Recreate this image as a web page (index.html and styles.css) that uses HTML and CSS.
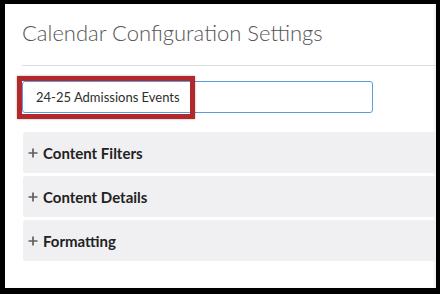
FILE: index.html
```html
<!DOCTYPE html>
<html lang="en">
<head>
<meta charset="utf-8">
<title>Calendar Configuration Settings</title>
<link rel="stylesheet" href="styles.css">
</head>
<body>
<div class="frame">
  <div class="page">
    <div class="content">
      <h1 class="title">Calendar Configuration Settings</h1>
      <div class="divider"></div>
      <div class="field">
        <input class="name-input" type="text" value="24-25 Admissions Events">
        <div class="highlight"></div>
      </div>
      <div class="sections">
        <div class="section">
          <svg class="plus" width="10" height="10" viewBox="0 0 10 10"><path d="M5 0.5V9.5M0.5 5H9.5" stroke="#5f5f5f" stroke-width="1.7" fill="none"/></svg>
          <span class="section-label">Content Filters</span>
        </div>
        <div class="section">
          <svg class="plus" width="10" height="10" viewBox="0 0 10 10"><path d="M5 0.5V9.5M0.5 5H9.5" stroke="#5f5f5f" stroke-width="1.7" fill="none"/></svg>
          <span class="section-label">Content Details</span>
        </div>
        <div class="section">
          <svg class="plus" width="10" height="10" viewBox="0 0 10 10"><path d="M5 0.5V9.5M0.5 5H9.5" stroke="#5f5f5f" stroke-width="1.7" fill="none"/></svg>
          <span class="section-label">Formatting</span>
        </div>
      </div>
    </div>
  </div>
</div>
</body>
</html>
```
FILE: styles.css
```css
html, body {
  margin: 0;
  padding: 0;
  background: #000;
}
body {
  width: 440px;
  height: 294px;
  overflow: hidden;
  font-family: Lato, "Liberation Sans", sans-serif;
}
.frame {
  padding: 4px 4px 6px 5px;
  height: 294px;
  box-sizing: border-box;
  display: flex;
}
.page {
  flex: 1;
  background: #fff;
  overflow: hidden;
  box-shadow: inset -2px 0 2px rgba(0,0,0,0.06);
}
.content {
  padding: 16px 0 0 17px;
  margin-right: -10px;
  display: flex;
  flex-direction: column;
}
.title {
  margin: 0;
  font-family: Lato, "Liberation Sans", sans-serif;
  font-weight: 300;
  font-size: 22px;
  line-height: 26px;
  color: #555;
  white-space: nowrap;
}
.divider {
  height: 1px;
  background: #dedede;
  margin-top: 19px;
}
.field {
  position: relative;
  margin-top: 15px;
  width: 351px;
  height: 32px;
}
.name-input {
  box-sizing: border-box;
  width: 351px;
  height: 32px;
  margin: 0;
  padding: 0 0 0 13px;
  border: 1px solid #5b9dd8;
  border-radius: 3px;
  font-family: Lato, "Liberation Sans", sans-serif;
  font-size: 13px;
  color: #2e2e2e;
  background: #fff;
  outline: none;
}
.highlight {
  position: absolute;
  left: -5px;
  top: -5px;
  width: 178px;
  height: 43px;
  box-sizing: border-box;
  border: 5px solid #b3282d;
  box-shadow: 0 0 2px rgba(0,0,0,0.35);
  pointer-events: none;
}
.sections {
  margin-top: 19px;
  margin-left: 1px;
  display: flex;
  flex-direction: column;
  gap: 3px;
}
.section {
  height: 41px;
  background: #f0f0f2;
  border-radius: 3px;
  display: flex;
  align-items: center;
  padding-left: 5px;
  gap: 5px;
}
.plus {
  display: block;
  flex: none;
  margin-top: 1px;
}
.section-label {
  font-family: Lato, "Liberation Sans", sans-serif;
  font-weight: 700;
  font-size: 15px;
  color: #222;
}
```
